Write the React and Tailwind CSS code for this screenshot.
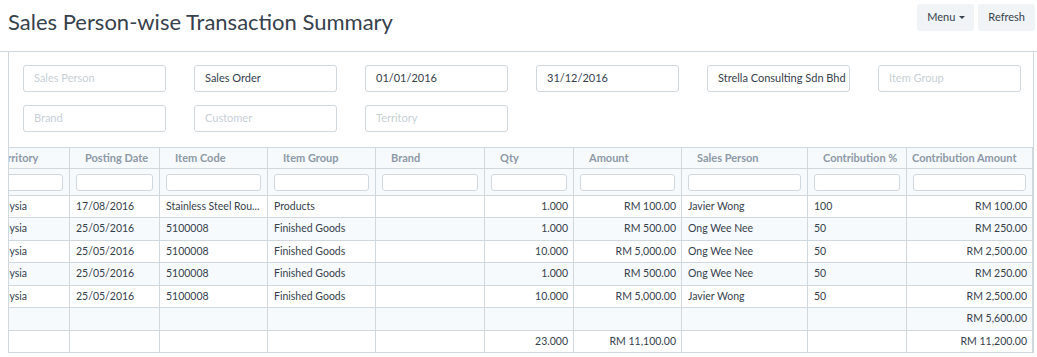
import React from 'react';

const columns = [
  { key: 'territory', label: 'Territory', width: 'w-[89px]' },
  { key: 'date', label: 'Posting Date', width: 'w-[90px]' },
  { key: 'item', label: 'Item Code', width: 'w-[108px]' },
  { key: 'group', label: 'Item Group', width: 'w-[108px]' },
  { key: 'brand', label: 'Brand', width: 'w-[109px]' },
  { key: 'qty', label: 'Qty', width: 'w-[89px]', right: true },
  { key: 'amount', label: 'Amount', width: 'w-[108px]', right: true },
  { key: 'person', label: 'Sales Person', width: 'w-[126px]' },
  { key: 'pct', label: 'Contribution %', width: 'w-[99px]' },
  { key: 'contrib', label: 'Contribution Amount', width: 'w-[126px]', right: true, tight: true },
];

const rows = [
  { territory: 'Malaysia', date: '17/08/2016', item: 'Stainless Steel Rou...', group: 'Products', qty: '1.000', amount: 'RM 100.00', person: 'Javier Wong', pct: '100', contrib: 'RM 100.00' },
  { territory: 'Malaysia', date: '25/05/2016', item: '5100008', group: 'Finished Goods', qty: '1.000', amount: 'RM 500.00', person: 'Ong Wee Nee', pct: '50', contrib: 'RM 250.00' },
  { territory: 'Malaysia', date: '25/05/2016', item: '5100008', group: 'Finished Goods', qty: '10.000', amount: 'RM 5,000.00', person: 'Ong Wee Nee', pct: '50', contrib: 'RM 2,500.00' },
  { territory: 'Malaysia', date: '25/05/2016', item: '5100008', group: 'Finished Goods', qty: '1.000', amount: 'RM 500.00', person: 'Ong Wee Nee', pct: '50', contrib: 'RM 250.00' },
  { territory: 'Malaysia', date: '25/05/2016', item: '5100008', group: 'Finished Goods', qty: '10.000', amount: 'RM 5,000.00', person: 'Javier Wong', pct: '50', contrib: 'RM 2,500.00' },
  { contrib: 'RM 5,600.00' },
  { qty: '23.000', amount: 'RM 11,100.00', contrib: 'RM 11,200.00' },
];

const filters = [
  { placeholder: 'Sales Person' },
  { value: 'Sales Order' },
  { value: '01/01/2016' },
  { value: '31/12/2016' },
  { value: 'Strella Consulting Sdn Bhd' },
  { placeholder: 'Item Group' },
  { placeholder: 'Brand' },
  { placeholder: 'Customer' },
  { placeholder: 'Territory' },
];

export default function App() {
  return (
    <div className="w-[1037px] h-[357px] overflow-hidden bg-white text-[#36414c] font-['Lato',sans-serif]">
      {/* Page header */}
      <div className="h-[52px] flex justify-between items-start border-b border-[#d1d8dd]">
        <h1 className="pl-[8px] pt-[9px] text-[22px] leading-[1.2] font-normal text-[#36414c]">
          Sales Person-wise Transaction Summary
        </h1>
        <div className="flex gap-[4px] mt-[4px] mr-[2px]">
          <button className="h-[27px] pl-[10px] pr-[9px] flex items-center rounded-[3px] bg-[#f0f4f7] text-[11px] text-[#36414c]">
            Menu
            <span className="ml-[4px] w-0 h-0 border-l-[3px] border-r-[3px] border-t-[3px] border-l-transparent border-r-transparent border-t-[#36414c]"></span>
          </button>
          <button className="h-[27px] px-[10px] rounded-[3px] bg-[#f0f4f7] text-[11px] text-[#36414c]">
            Refresh
          </button>
        </div>
      </div>

      {/* Page body */}
      <div className="ml-[8px] mr-[3px] border-l border-r border-[#d1d8dd]">
        {/* Filters */}
        <div className="pl-[14px] pt-[13px] pb-[15px] grid grid-cols-[repeat(6,143px)] gap-x-[28px] gap-y-[13px]">
          {filters.map((f, i) => (
            <div
              key={i}
              className="h-[27px] px-[10px] flex items-center border border-[#d1d8dd] rounded-[3px] text-[11px] whitespace-nowrap overflow-hidden"
            >
              {f.value ? (
                <span className="text-[#36414c]">{f.value}</span>
              ) : (
                <span className="text-[#c8d0d6]">{f.placeholder}</span>
              )}
            </div>
          ))}
        </div>

        {/* Report grid, scrolled a little to the right */}
        <div className="overflow-hidden border-t border-[#d1d8dd]">
          <div className="ml-[-28px] w-max">
            {/* Column headers */}
            <div className="flex h-[21px] bg-[#f7fafc] border-b border-[#d1d8dd]">
              {columns.map(c => (
                <div
                  key={c.key}
                  className={`${c.width} shrink-0 border-r border-[#d1d8dd] flex items-center text-[11px] font-bold text-[#8d99a6] whitespace-nowrap overflow-hidden ${c.tight ? 'pl-[5px]' : 'pl-[15px]'}`}
                >
                  {c.label}
                </div>
              ))}
            </div>

            {/* Filter inputs */}
            <div className="flex h-[27px] bg-[#f7fafc] border-b border-[#d1d8dd]">
              {columns.map(c => (
                <div key={c.key} className={`${c.width} shrink-0 border-r border-[#d1d8dd] px-[6px] flex items-center`}>
                  <div className="w-full h-[17px] bg-white border border-[#d1d8dd] rounded-[3px]"></div>
                </div>
              ))}
            </div>

            {/* Rows */}
            {rows.map((r, i) => (
              <div
                key={i}
                className={`flex border-b border-[#d1d8dd] ${i % 2 === 1 ? 'h-[23px] bg-[#f7fafc]' : 'h-[22px] bg-white'}`}
              >
                {columns.map(c => (
                  <div
                    key={c.key}
                    className={`${c.width} shrink-0 border-r border-[#d1d8dd] flex items-center text-[10.5px] text-[#36414c] whitespace-nowrap overflow-hidden ${c.right ? 'justify-end pr-[5px]' : 'pl-[6px]'}`}
                  >
                    {r[c.key] || ''}
                  </div>
                ))}
              </div>
            ))}
          </div>
        </div>
      </div>
    </div>
  );
}
